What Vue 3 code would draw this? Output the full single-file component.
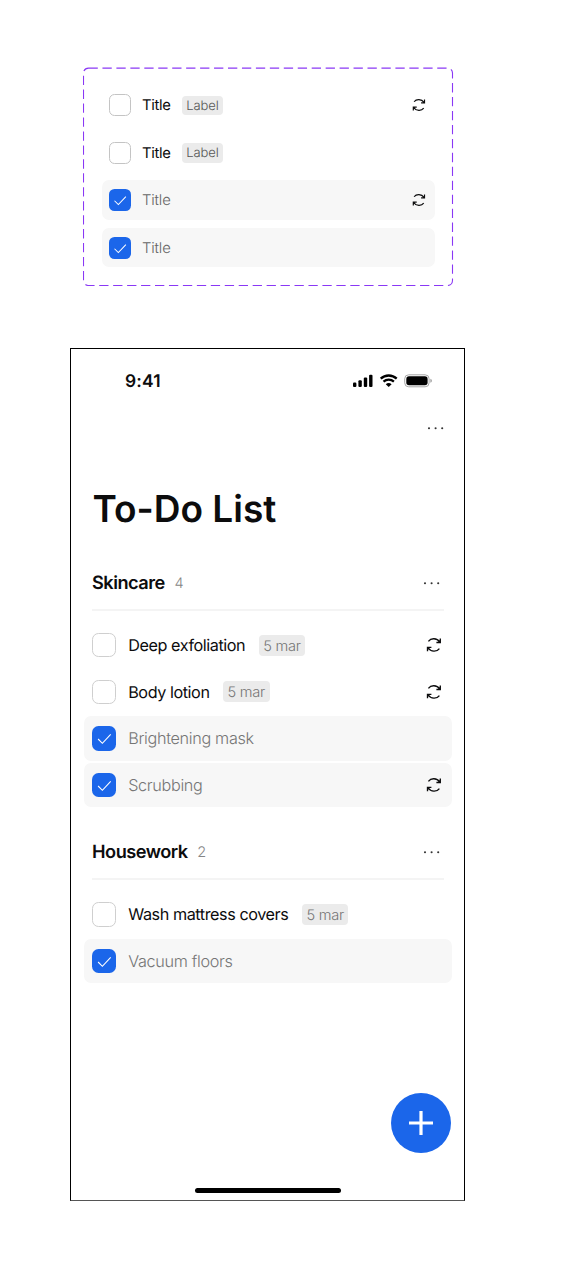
<script setup>
import { h } from 'vue'

const variants = [
  { title: 'Title', label: 'Label', done: false, repeat: true },
  { title: 'Title', label: 'Label', done: false, repeat: false },
  { title: 'Title', done: true, repeat: true },
  { title: 'Title', done: true, repeat: false },
]

const groups = [
  {
    name: 'Skincare',
    count: 4,
    items: [
      { title: 'Deep exfoliation', label: '5 mar', done: false, repeat: true },
      { title: 'Body lotion', label: '5 mar', done: false, repeat: true },
      { title: 'Brightening mask', done: true, repeat: false },
      { title: 'Scrubbing', done: true, repeat: true },
    ],
  },
  {
    name: 'Housework',
    count: 2,
    items: [
      { title: 'Wash mattress covers', label: '5 mar', done: false, repeat: false },
      { title: 'Vacuum floors', done: true, repeat: false },
    ],
  },
]

const stroke = { fill: 'none', stroke: 'currentColor' }

const CheckIcon = () =>
  h('svg', { viewBox: '0 0 24 24' }, [
    h('path', { d: 'M6 12.8 L10.2 17 L18.4 8.3', ...stroke, 'stroke-width': 1.1 }),
  ])

const RepeatIcon = () =>
  h('svg', { viewBox: '0 0 16 16' }, [
    h('path', {
      d: 'M2.4 4.3 C5 0.8 10.8 0.8 13.8 5 M14.3 1.6 V5.5 H10.4 M13.4 11.6 C10.8 15.1 5 15.1 2 10.9 M1.5 14.3 V10.4 H5.4',
      ...stroke,
      'stroke-width': 1.35,
    }),
  ])

const DotsIcon = () =>
  h('svg', { viewBox: '0 0 18 4' }, [2, 8.6, 15.2].map((cx) => h('circle', { cx, cy: 2.2, r: 1.05, fill: 'currentColor' })))
</script>

<template>
  <main class="board">
    <section class="variants">
      <svg class="dash" viewBox="0 0 371 219">
        <rect x="0.5" y="1.1" width="369" height="217.4" rx="5" />
      </svg>
      <div v-for="(v, i) in variants" :key="i" class="row small" :class="{ done: v.done }">
        <span class="box"><CheckIcon v-if="v.done" /></span>
        <span class="title">{{ v.title }}</span>
        <span v-if="v.label" class="label">{{ v.label }}</span>
        <RepeatIcon v-if="v.repeat" class="repeat" />
      </div>
    </section>

    <section class="phone">
      <header class="status">
        <span class="time">9:41</span>
        <svg class="signals" viewBox="0 0 80 14">
          <rect x="0" y="8.6" width="3.4" height="4.4" rx="1.1" />
          <rect x="5.4" y="6.2" width="3.4" height="6.8" rx="1.1" />
          <rect x="10.8" y="3.5" width="3.4" height="9.5" rx="1.1" />
          <rect x="16.1" y="0.7" width="3.4" height="12.3" rx="1.1" />
          <g class="waves">
            <path d="M27.7 4.7 C32.2 0.4 39.2 0.4 43.7 4.7" />
            <path d="M30.5 7.7 C33.5 5 37.9 5 40.9 7.7" />
          </g>
          <path d="M32.8 10.2 C34.5 8.7 36.9 8.7 38.6 10.2 L35.7 13.1 Z" />
          <rect class="shell" x="51.7" y="0.8" width="24.4" height="12" rx="4" />
          <rect x="53.3" y="2.3" width="21.3" height="9" rx="2.7" />
          <path class="nub" d="M77.3 4.8 Q79 5.4 79 6.8 Q79 8.2 77.3 8.8 Z" />
        </svg>
      </header>
      <nav class="toolbar"><DotsIcon class="dots" /></nav>
      <h1>To-Do List</h1>

      <section v-for="g in groups" :key="g.name" class="group">
        <header class="head">
          <h2>{{ g.name }}</h2>
          <span class="count">{{ g.count }}</span>
          <DotsIcon class="dots" />
        </header>
        <div class="list">
          <div v-for="t in g.items" :key="t.title" class="row" :class="{ done: t.done }">
            <span class="box"><CheckIcon v-if="t.done" /></span>
            <span class="title">{{ t.title }}</span>
            <span v-if="t.label" class="label">{{ t.label }}</span>
            <RepeatIcon v-if="t.repeat" class="repeat" />
          </div>
        </div>
      </section>

      <button class="add" aria-label="Add">
        <svg viewBox="0 0 24 24"><path d="M12 0 V24 M0 12 H24" /></svg>
      </button>
      <div class="home"></div>
    </section>
  </main>
</template>

<style>
body {
  background: #fff;
}
</style>

<style scoped>
.board {
  box-sizing: border-box;
  height: 1265px;
  padding-top: 67px;
  font-family: Inter, "Liberation Sans", sans-serif;
  text-rendering: geometricPrecision;
  color: #0c0c0d;
}
svg {
  display: block;
}
.variants {
  position: relative;
  box-sizing: border-box;
  width: 371px;
  height: 219px;
  margin-left: 83px;
  padding: 18.6px 18.5px;
  display: flex;
  flex-direction: column;
  gap: 7.6px;
}
.dash {
  position: absolute;
  inset: 0;
  width: 371px;
  height: 219px;
}
.dash rect {
  fill: none;
  stroke: #8a38f5;
  stroke-width: 1.1;
  stroke-dasharray: 9.3 4.65;
}
.row {
  box-sizing: border-box;
  display: flex;
  align-items: center;
  width: 367.5px;
  height: 44.4px;
  padding: 0 9.2px 0 8px;
  border-radius: 7px;
}
.row.done {
  background: #f7f7f7;
}
.box {
  box-sizing: border-box;
  flex: none;
  width: 24.4px;
  height: 24.4px;
  border: 1.4px solid #cfcfcf;
  border-radius: 6.5px;
  margin-right: 11.8px;
}
.done .box {
  border: 0;
  background: #1b66ea;
  color: #fff;
}
.title {
  font-size: 16.2px;
  line-height: 20px;
  letter-spacing: -0.43px;
  font-weight: 380;
  white-space: nowrap;
}
.done .title {
  color: #757575;
  font-weight: 350;
  letter-spacing: -0.32px;
}
.label {
  box-sizing: border-box;
  height: 21px;
  line-height: 22px;
  margin-left: 13.7px;
  padding: 0 4.4px;
  border-radius: 4px;
  background: #ebebeb;
  color: #757575;
  font-size: 14.6px;
  font-weight: 360;
  letter-spacing: -0.25px;
  white-space: nowrap;
}
.repeat {
  width: 16px;
  height: 16px;
  margin-left: auto;
}
.small {
  width: 333px;
  height: 40px;
  padding: 0 8.3px 0 7.5px;
}
.small .box {
  width: 22px;
  height: 22px;
  border: 1.2px solid #c4c4c4;
  border-radius: 5.5px;
  margin-right: 11px;
}
.small.done .box {
  border: 0;
}
.small .title {
  font-size: 14.8px;
  line-height: 21px;
  padding-top: 1px;
  letter-spacing: -0.3px;
}
.small.done .title {
  color: #666;
  letter-spacing: -0.15px;
}
.small .label {
  height: 19.6px;
  line-height: 21px;
  margin-left: 11.7px;
  padding: 0 3.8px;
  font-size: 13px;
  font-weight: 300;
  letter-spacing: -0.05px;
  color: #555;
}
.small .repeat {
  width: 14px;
  height: 14px;
}
.phone {
  position: relative;
  box-sizing: border-box;
  width: 395px;
  height: 853px;
  margin: 62px 0 0 70px;
  border: 1px solid #000;
  border-bottom-color: #555;
}
.status {
  display: flex;
  align-items: center;
  justify-content: space-between;
  height: 20px;
  padding: 22px 31px 0 54px;
}
.time {
  font-size: 17.4px;
  font-weight: 590;
  line-height: 20px;
  padding-top: 1px;
  letter-spacing: 0.2px;
}
.signals {
  width: 80px;
  height: 14px;
}
.waves {
  fill: none;
  stroke: #000;
  stroke-width: 2.3;
}
.shell {
  fill: none;
  stroke: #a6a6a6;
}
.nub {
  fill: #a6a6a6;
}
.toolbar {
  display: flex;
  justify-content: flex-end;
  padding: 35px 18.8px 0 0;
}
.dots {
  width: 18px;
  height: 4px;
  color: #333;
}
h1 {
  margin: 56px 0 0 21.5px;
  font-size: 37px;
  line-height: 46px;
  font-weight: 590;
  letter-spacing: 0;
}
.group {
  padding-left: 13px;
}
.head {
  box-sizing: border-box;
  display: flex;
  align-items: center;
  width: 352px;
  height: 79px;
  padding: 25px 3.2px 0 0;
  margin-left: 8px;
  border-bottom: 2px solid #f4f4f4;
}
.group + .group .head {
  height: 73px;
  padding-top: 19px;
}
h2 {
  margin: 0;
  font-size: 18.2px;
  font-weight: 590;
  line-height: 22px;
  letter-spacing: -0.5px;
}
.count {
  margin-left: 9.5px;
  font-size: 14.5px;
  font-weight: 300;
  color: #858585;
}
.head .dots {
  margin-left: auto;
}
.list {
  display: flex;
  flex-direction: column;
  gap: 2.2px;
  padding-top: 12px;
}
.add {
  position: absolute;
  left: 319.7px;
  top: 743.6px;
  width: 60.6px;
  height: 60.6px;
  padding: 18.3px;
  border: 0;
  border-radius: 50%;
  background: #1b66ea;
}
.add svg {
  width: 24px;
  height: 24px;
}
.add path {
  stroke: #fff;
  stroke-width: 3.2;
}
.home {
  position: absolute;
  left: 124px;
  bottom: 7px;
  width: 145.5px;
  height: 5px;
  border-radius: 3px;
  background: #000;
}
</style>
